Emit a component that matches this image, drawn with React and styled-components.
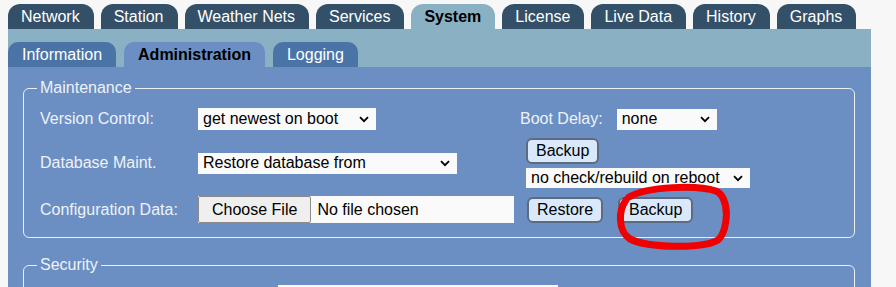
import React from 'react';
import styled, { createGlobalStyle } from 'styled-components';

const GlobalStyle = createGlobalStyle`
  body {
    margin: 0;
    background: #f7f7f7;
    font-family: "Liberation Sans", Arial, sans-serif;
    font-size: 16px;
  }
`;

const Page = styled.div`
  position: relative;
  width: 863px;
  margin-left: 8px;
  padding-top: 4px;
`;

const TopTabs = styled.div`
  display: flex;
  gap: 7px;
  height: 25px;
`;

const TopTab = styled.div`
  height: 25px;
  line-height: 25px;
  padding: 0 14px 0 13px;
  border-radius: 12px 12px 0 0;
  background: ${p => (p.active ? '#8ab0c4' : '#345068')};
  color: ${p => (p.active ? '#000' : '#fff')};
  font-weight: ${p => (p.active ? 'bold' : 'normal')};
  white-space: nowrap;
`;

const SubBar = styled.div`
  display: flex;
  gap: 8px;
  padding-top: 13px;
  background: #8ab0c4;
`;

const SubTab = styled.div`
  height: 25px;
  line-height: 25px;
  padding: 0 14px;
  border-radius: 10px 10px 0 0;
  background: ${p => (p.active ? '#6b8fc2' : '#4b74a6')};
  color: ${p => (p.active ? '#000' : '#fff')};
  font-weight: ${p => (p.active ? 'bold' : 'normal')};
`;

const Panel = styled.div`
  background: #6b8fc2;
  padding: 12px 0 40px;
`;

const Fieldset = styled.fieldset`
  margin: ${p => (p.first ? '0' : '18px')} 16px 0 15px;
  padding: 11px 16px 14px;
  border: 1px solid #e9eef7;
  border-radius: 6px;
`;

const Legend = styled.legend`
  margin-left: -3px;
  padding: 0 3px;
  line-height: 18px;
  color: #eef2f8;
`;

const FormGrid = styled.div`
  display: grid;
  grid-template-columns: 158px 322px auto;
  row-gap: 8px;
  align-items: center;
`;

const Label = styled.div`
  color: #eef2f8;
  white-space: nowrap;
`;

const Cell = styled.div`
  display: flex;
  flex-direction: ${p => (p.stack ? 'column' : 'row')};
  align-items: ${p => (p.stack ? 'flex-start' : 'center')};
  gap: ${p => p.gap || 0}px;
  padding-left: ${p => p.indent || 0}px;
`;

const SelectBox = styled.div`
  display: flex;
  align-items: center;
  justify-content: space-between;
  box-sizing: border-box;
  width: ${p => p.w}px;
  height: ${p => p.h || 21}px;
  padding: 0 7px 0 5px;
  background: #fafafa;
  color: #000;
  white-space: nowrap;
`;

const Chevron = styled.svg`
  flex: none;
  margin-left: 4px;
`;

const Button = styled.button`
  height: 26px;
  padding: 0 ${p => p.pad || 8}px;
  border: 2px solid #5d6b80;
  border-radius: 6px;
  background: #d9e8fa;
  color: #000;
  font-family: inherit;
  font-size: 16px;
`;

const FileBox = styled.div`
  display: flex;
  align-items: center;
  width: 316px;
  height: 27px;
  background: #fafafa;
`;

const ChooseButton = styled.button`
  height: 27px;
  padding: 0 13px;
  border: 1px solid #8a8a8a;
  border-radius: 2px;
  background: #efefef;
  color: #000;
  font-family: inherit;
  font-size: 16px;
`;

const FileText = styled.span`
  margin-left: 6px;
  color: #000;
`;

const SecurityRow = styled.div`
  padding-left: 238px;
`;

const TextInput = styled.div`
  width: 280px;
  height: 22px;
  background: #fafafa;
`;

const Scribble = styled.svg`
  position: absolute;
  left: 0;
  top: 0;
  pointer-events: none;
`;

function Select({ w, h, children }) {
  return (
    <SelectBox w={w} h={h}>
      <span>{children}</span>
      <Chevron width="10" height="7" viewBox="0 0 10 7">
        <path d="M1 1.2 L5 5.2 L9 1.2" fill="none" stroke="#000" strokeWidth="1.8" />
      </Chevron>
    </SelectBox>
  );
}

const topTabs = ['Network', 'Station', 'Weather Nets', 'Services', 'System', 'License', 'Live Data', 'History', 'Graphs'];
const subTabs = ['Information', 'Administration', 'Logging'];

export default function App() {
  return (
    <Page>
      <GlobalStyle />
      <TopTabs>
        {topTabs.map(t => (
          <TopTab key={t} active={t === 'System'}>{t}</TopTab>
        ))}
      </TopTabs>
      <SubBar>
        {subTabs.map(t => (
          <SubTab key={t} active={t === 'Administration'}>{t}</SubTab>
        ))}
      </SubBar>
      <Panel>
        <Fieldset first>
          <Legend>Maintenance</Legend>
          <FormGrid>
            <Label>Version Control:</Label>
            <Cell>
              <Select w={178} h={22}>get newest on boot</Select>
            </Cell>
            <Cell gap={14}>
              <Label>Boot Delay:</Label>
              <Select w={100}>none</Select>
            </Cell>

            <Label>Database Maint.</Label>
            <Cell>
              <Select w={259}>Restore database from</Select>
            </Cell>
            <Cell stack gap={4} indent={6}>
              <Button>Backup</Button>
              <Select w={224} h={20}>no check/rebuild on reboot</Select>
            </Cell>

            <Label>Configuration Data:</Label>
            <Cell>
              <FileBox>
                <ChooseButton>Choose File</ChooseButton>
                <FileText>No file chosen</FileText>
              </FileBox>
            </Cell>
            <Cell gap={15} indent={7}>
              <Button>Restore</Button>
              <Button pad={9}>Backup</Button>
            </Cell>
          </FormGrid>
        </Fieldset>
        <Fieldset>
          <Legend>Security</Legend>
          <SecurityRow>
            <TextInput />
          </SecurityRow>
        </Fieldset>
      </Panel>
      <Scribble width="896" height="287" viewBox="0 0 896 287">
        <path
          d="M621 197 C 640 186, 690 185, 708 191 C 722 197, 721 230, 710 240 C 695 249, 640 248, 622 239 C 610 231, 610 211, 618 200"
          fill="none"
          stroke="#f00000"
          strokeWidth="7"
          strokeLinecap="round"
        />
      </Scribble>
    </Page>
  );
}
